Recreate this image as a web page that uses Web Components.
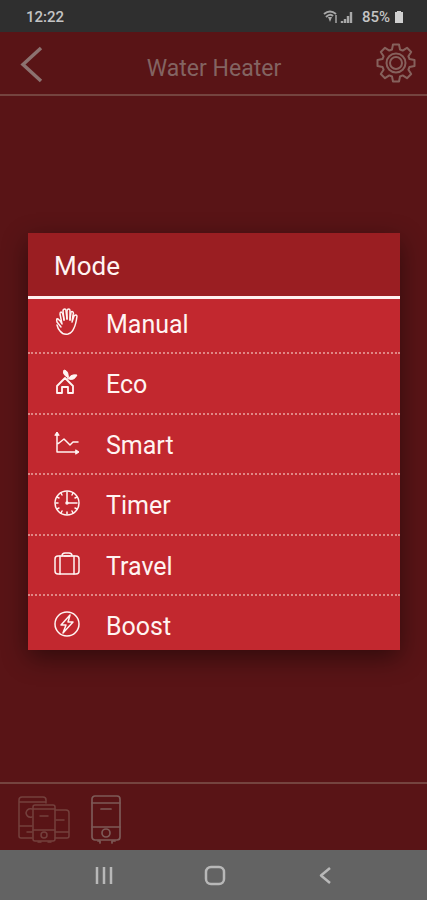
<!DOCTYPE html>
<html lang="en">
<head>
<meta charset="utf-8">
<meta name="viewport" content="width=device-width, initial-scale=1">
<title>Water Heater</title>
<style>
    html, body {
        height: 100%;
        margin: 0;
    }
    body {
        font-family: Roboto, "Liberation Sans", sans-serif;
        background: #591416;
    }
</style>
</head>
<body>
<heater-app>
    <status-bar slot="status" time="12:22" battery="85%"></status-bar>
    <app-header slot="header">Water Heater</app-header>
    <device-bar slot="devices"></device-bar>
    <system-nav slot="nav"></system-nav>
    <mode-dialog label="Mode">
        <mode-item icon="manual">Manual</mode-item>
        <mode-item icon="eco">Eco</mode-item>
        <mode-item icon="smart">Smart</mode-item>
        <mode-item icon="timer">Timer</mode-item>
        <mode-item icon="travel">Travel</mode-item>
        <mode-item icon="boost">Boost</mode-item>
    </mode-dialog>
</heater-app>

<script>
const createTemplate = html => {
    const template = document.createElement('template');
    template.innerHTML = html;
    return template;
};

const buttonReset = `
    button {
        margin: 0;
        padding: 0;
        border: none;
        background: none;
        color: inherit;
        font: inherit;
        cursor: pointer;
    }
    svg {
        display: block;
        fill: none;
        stroke: currentColor;
        stroke-linecap: round;
        stroke-linejoin: round;
    }
`;

class BaseElement extends HTMLElement {
    constructor() {
        super();
        this.root = this.attachShadow({mode: 'open'});
        this.root.appendChild(this.constructor.template.content.cloneNode(true));
    }
}

class HeaterApp extends BaseElement {
    static template = createTemplate(`
        <style>
        :host {
            display: flex;
            flex-direction: column;
            min-height: 100vh;
        }
        main {
            flex: 1;
            display: flex;
            flex-direction: column;
            position: relative;
        }
        .stage {
            flex: 1;
        }
        .overlay {
            position: absolute;
            inset: 0;
            display: flex;
            align-items: center;
            padding: 0 27px 0 28px;
        }
        </style>
        <slot name="status"></slot>
        <main>
            <slot name="header"></slot>
            <div class="stage"></div>
            <slot name="devices"></slot>
            <div class="overlay"><slot></slot></div>
        </main>
        <slot name="nav"></slot>
    `);
}

class StatusBar extends BaseElement {
    static template = createTemplate(`
        <style>
        :host {
            display: flex;
            align-items: center;
            justify-content: space-between;
            height: 32px;
            padding: 2px 23px 0 26px;
            box-sizing: border-box;
            background: #2f2f2f;
            color: #c4c4c4;
            font-size: 15px;
            font-weight: 500;
        }
        .icons {
            display: flex;
            align-items: center;
        }
        .battery {
            margin: 0 4px 0 8px;
        }
        svg {
            display: block;
        }
        </style>
        <span class="time"></span>
        <div class="icons">
            <svg width="31" height="14" viewBox="0 0 31 14" fill="none" stroke="#a8a8a8" stroke-width="2">
                <path d="M1 4Q7 -1 13 4M3 7Q7 3 10 6"/>
                <path d="M5 7h4l-2 5z" fill="#a8a8a8" stroke="none"/>
                <path d="M13 5v8" stroke-width="1.5"/>
                <path d="M19 11v2M22 9v4M25 6v7M28 2v11" stroke-width="2.4"/>
            </svg>
            <span class="battery"></span>
            <svg width="10" height="14" viewBox="0 0 10 14" fill="#d0d0d0">
                <path d="M3 1h4v1h2v11H1V2h2z"/>
            </svg>
        </div>
    `);

    connectedCallback() {
        this.root.querySelector('.time').textContent = this.getAttribute('time');
        this.root.querySelector('.battery').textContent = this.getAttribute('battery');
    }
}

class AppHeader extends BaseElement {
    static template = createTemplate(`
        <style>
        ${buttonReset}
        :host {
            display: grid;
            grid-template-columns: 40px 1fr 40px;
            align-items: center;
            height: 64px;
            padding: 0 11px 0 12px;
            box-sizing: border-box;
            border-bottom: 2px solid #75443f;
            color: #836462;
        }
        h1 {
            margin: 0;
            padding-top: 10px;
            font-size: 23px;
            font-weight: 400;
            text-align: center;
        }
        </style>
        <button type="button" aria-label="Back">
            <svg width="40" height="40" viewBox="0 0 40 40" stroke-width="3.5" color="#8c7270">
                <path d="M29 5L11 21.5L29 38" stroke-linecap="butt" stroke-linejoin="miter"/>
            </svg>
        </button>
        <h1><slot></slot></h1>
        <button type="button" aria-label="Settings">
            <svg width="40" height="40" viewBox="-20 -20 40 40" stroke-width="2" color="#86615c">
                <path d="M-4 -13.5L-3 -18.5L3 -18.5L4 -13.5L6.7 -12.4L11 -15.2L15.2 -11L12.4 -6.7L13.5 -4L18.5 -3L18.5 3L13.5 4L12.4 6.7L15.2 11L11 15.2L6.7 12.4L4 13.5L3 18.5L-3 18.5L-4 13.5L-6.7 12.4L-11 15.2L-15.2 11L-12.4 6.7L-13.5 4L-18.5 3L-18.5 -3L-13.5 -4L-12.4 -6.7L-15.2 -11L-11 -15.2L-6.7 -12.4Z"/>
                <circle r="9.5"/>
                <circle r="6"/>
            </svg>
        </button>
    `);
}

class DeviceBar extends BaseElement {
    static template = createTemplate(`
        <style>
        ${buttonReset}
        :host {
            display: flex;
            gap: 20px;
            height: 68px;
            padding: 11px 16px 0;
            box-sizing: border-box;
            border-top: 2px solid #75443f;
        }
        button {
            height: 50px;
        }
        </style>
        <button type="button" aria-label="All heaters">
            <svg width="54" height="50" viewBox="0 0 54 50" stroke-width="1.5" color="#74403d">
                <path d="M16 43H5q-2 0-2-2V5q0-3 3-3h21q3 0 3 3v3M3 7h27M3 31h13M16 14q-5-1-6 4q1 5 6 4M11 37h5"/>
                <rect x="17" y="10" width="22" height="36" rx="2"/>
                <path d="M17 14h22M17 35h22M24 21h8M22 47h3M32 47h3"/>
                <circle cx="28" cy="40" r="3"/>
                <path d="M39 15h11q3 0 3 3v23q0 2-2 2H39M40 25h8M39 37h14"/>
            </svg>
        </button>
        <button type="button" aria-label="Water heater">
            <svg width="32" height="50" viewBox="0 0 32 50" stroke-width="1.7" color="#7d5a57">
                <rect x="2" y="1" width="28" height="44" rx="3"/>
                <path d="M2 8h28M2 32h28M11 14h10"/>
                <path d="M10 46v2M22 46v2M10 46h-2M22 46h3"/>
                <circle cx="16" cy="38" r="4"/>
            </svg>
        </button>
    `);
}

class SystemNav extends BaseElement {
    static template = createTemplate(`
        <style>
        ${buttonReset}
        :host {
            display: flex;
            justify-content: center;
            gap: 87px;
            height: 50px;
            padding-left: 2px;
            background: #636363;
            color: #b8b8b8;
        }
        </style>
        <button type="button" aria-label="Recent apps">
            <svg width="24" height="24" viewBox="0 0 24 24" stroke-width="2.5">
                <path d="M5 4v17M12 4v17M19 4v17" stroke-linecap="butt"/>
            </svg>
        </button>
        <button type="button" aria-label="Home">
            <svg width="24" height="24" viewBox="0 0 24 24" stroke-width="2.5">
                <rect x="3" y="4" width="18" height="17" rx="5"/>
            </svg>
        </button>
        <button type="button" aria-label="Back">
            <svg width="24" height="24" viewBox="0 0 24 24" stroke-width="2.5">
                <path d="M16 5L7 12.5L16 20" stroke-linecap="butt"/>
            </svg>
        </button>
    `);
}

class ModeDialog extends BaseElement {
    static template = createTemplate(`
        <style>
        :host {
            display: block;
            flex: 1;
            background: #c2282f;
            color: #fff4f2;
            box-shadow: 0 8px 24px rgba(0, 0, 0, .45);
        }
        h2 {
            margin: 0;
            padding: 4px 26px 0;
            border-bottom: 3px solid #fff0ef;
            background: #9a1e22;
            font-size: 26px;
            font-weight: 400;
            line-height: 59px;
        }
        /* the viewport is a little shorter than its list */
        .viewport {
            display: flex;
            align-items: center;
            height: 351px;
            overflow: hidden;
        }
        .list {
            flex: 1;
            flex-shrink: 0;
            display: grid;
            grid-auto-rows: 1fr;
            height: 363px;
            padding-top: 2px;
        }
        </style>
        <section role="dialog" aria-labelledby="title">
            <h2 id="title"></h2>
            <div class="viewport">
                <div class="list" role="list"><slot></slot></div>
            </div>
        </section>
    `);

    connectedCallback() {
        this.root.querySelector('h2').textContent = this.getAttribute('label');
    }
}

const modeIcons = {
    manual: `
        <path d="M8 18L4 13q-1-4 1-3q2 1 4 5L7 5q0-2 1-2q2 0 3 8"/>
        <path d="M11 11L10 2q0-2 2-2q1 0 1 2l1 8"/>
        <path d="M14 10V2q0-2 2-2q1 0 1 2v9"/>
        <path d="M17 11l1-8q1-1 2 0q1 1 0 3l-1 7l2-6q2-2 3 0q-1 8-3 12q-2 5-6 6q-5 1-8-3q-2-2-3-6"/>`,
    eco: `
        <path d="M4 17L12 9L20 17V24H15V18H9V24H4Z" stroke-width="1.8"/>
        <path d="M15 10V7"/>
        <path d="M14 8Q9 5 11 1Q16 2 15 8ZM16 9Q18 5 24 6Q21 12 16 10Z" fill="currentColor" stroke-width="1"/>`,
    smart: `
        <path d="M4 3v19h20M4 14l2-1l5-4l6 6l3-3h5"/>
        <path d="M2 5l2-3l2 3zM23 20l3 2l-3 2z" fill="currentColor" stroke-width="1"/>`,
    timer: `
        <circle cx="14" cy="13" r="12"/>
        <path d="M14 2v11h10M14 22v2M3 13h2M8 3l1 2M4 7l2 1M20 3l-1 2M24 7l-2 1M4 19l2-1M8 23l1-2M20 23l-1-2M24 19l-2-1"/>
        <circle cx="14" cy="13" r="1" fill="currentColor"/>`,
    travel: `
        <rect x="2" y="5" width="24" height="18" rx="3"/>
        <path d="M7 5v18M21 5v18M9 5q0-3 3-3h4q3 0 3 3M11 5h6"/>`,
    boost: `
        <circle cx="14" cy="13" r="12"/>
        <path d="M17 4L8 14h5l-3 8L20 11h-5z"/>`
};

class ModeItem extends BaseElement {
    static template = createTemplate(`
        <style>
        ${buttonReset}
        :host {
            display: block;
            border-bottom: 2px dotted #e08785;
        }
        :host(:last-child) {
            border-bottom-color: transparent;
        }
        button {
            display: flex;
            align-items: center;
            gap: 25px;
            width: 100%;
            height: 100%;
            padding: 0 25px;
            font-size: 25px;
            text-align: left;
        }
        svg {
            overflow: visible;
        }
        span {
            padding-top: 3px;
        }
        </style>
        <button type="button">
            <svg width="28" height="28" viewBox="0 0 28 28" stroke-width="1.5" aria-hidden="true"></svg>
            <span><slot></slot></span>
        </button>
    `);

    connectedCallback() {
        this.setAttribute('role', 'listitem');
        this.root.querySelector('svg').innerHTML = modeIcons[this.getAttribute('icon')];
    }
}

customElements.define('heater-app', HeaterApp);
customElements.define('status-bar', StatusBar);
customElements.define('app-header', AppHeader);
customElements.define('device-bar', DeviceBar);
customElements.define('system-nav', SystemNav);
customElements.define('mode-dialog', ModeDialog);
customElements.define('mode-item', ModeItem);
</script>
</body>
</html>
